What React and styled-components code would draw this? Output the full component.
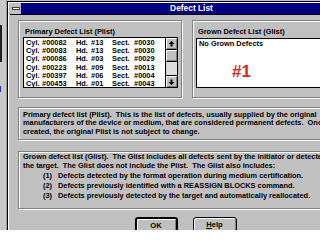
import React from "react";
import styled, { createGlobalStyle } from "styled-components";

const FONT = `"Liberation Sans", Arial, sans-serif`;

const Global = createGlobalStyle`
  html, body { margin: 0; padding: 0; background: #ffffff; }
  body { font-family: ${FONT}; }
`;

const Screen = styled.div`
  width: 320px;
  height: 230px;
  overflow: hidden;
  display: flex;
  background: #c0c0c0;
  font-family: ${FONT};
  font-weight: bold;
  font-size: 7.4px;
  color: #000;
`;

const BackWindow = styled.div`
  width: 7px;
  flex-shrink: 0;
  display: flex;
  flex-direction: column;
  background: #c8c8c8;
  box-sizing: border-box;
  border-right: 1px solid #9a9a9a;
`;

const Mark = styled.div`
  margin-top: ${(p) => p.$gap}px;
  height: ${(p) => p.$h}px;
  width: ${(p) => p.$w}px;
  background: ${(p) => p.$c};
`;

const Dialog = styled.div`
  width: 354px;
  flex-shrink: 0;
  margin-top: 1px;
  box-sizing: border-box;
  border-left: 1px solid #000;
  border-top: 1px solid #000;
  padding: 1px 0 0 2px;
  background: #c0c0c0;
  box-shadow: inset 1px 1px 0 #ffffff;
  display: flex;
  flex-direction: column;
`;

const TitleBar = styled.div`
  display: flex;
  height: 12px;
  box-sizing: border-box;
  border-bottom: 1px solid #000;
`;

const SysMenu = styled.div`
  width: 12px;
  box-sizing: border-box;
  border-right: 1px solid #000;
  background: #c0c0c0;
  display: flex;
  align-items: center;
  justify-content: center;
`;

const SysBar = styled.div`
  width: 8px;
  height: 3px;
  box-sizing: border-box;
  background: #ffffff;
  border: 1px solid #404040;
`;

const Caption = styled.div`
  flex: 1;
  background: #000080;
  color: #ffffff;
  font-size: 8.4px;
  line-height: 11px;
  text-align: center;
  white-space: pre;
`;

const Client = styled.div`
  padding: 5px 8px 0 8px;
  display: flex;
  flex-direction: column;
`;

const TopRow = styled.div`
  display: flex;
  gap: 10px;
  height: 78px;
`;

const Panel = styled.div`
  box-sizing: border-box;
  border: 1px solid #808080;
  box-shadow: inset 1px 1px 0 #ffffff, 1px 1px 0 #ffffff;
  display: flex;
  flex-direction: column;
  padding-top: 6px;
  width: ${(p) => (p.$width ? `${p.$width}px` : "auto")};
  flex: ${(p) => (p.$width ? "none" : "1")};
`;

const Label = styled.div`
  line-height: 9px;
  margin-left: ${(p) => p.$indent}px;
  white-space: pre;
`;

const ListBox = styled.div`
  position: relative;
  box-sizing: border-box;
  border: 1px solid #000;
  background: #ffffff;
  height: ${(p) => p.$h}px;
  margin: ${(p) => p.$top}px ${(p) => p.$right}px 0 ${(p) => p.$left}px;
  display: flex;
  overflow: hidden;
`;

const Rows = styled.div`
  flex: 1;
  padding: 1px 0 0 2px;
  overflow: hidden;
`;

const DefectRow = styled.div`
  display: grid;
  grid-template-columns: 16px 34px 15px 21px 22px auto;
  line-height: 8.2px;
  height: 8.2px;
  white-space: pre;
`;

const ScrollBar = styled.div`
  width: 12px;
  box-sizing: border-box;
  border-left: 1px solid #000;
  display: flex;
  flex-direction: column;
  background: #dcdcdc;
`;

const ScrollBtn = styled.div`
  height: ${(p) => p.$h}px;
  flex-shrink: 0;
  background: #c0c0c0;
  box-shadow: inset 1px 1px 0 #ffffff, inset -1px -1px 0 #808080;
  border-bottom: ${(p) => (p.$pos === "top" ? "1px solid #000" : "none")};
  border-top: ${(p) => (p.$pos === "bottom" ? "1px solid #000" : "none")};
  display: flex;
  align-items: center;
  justify-content: center;
`;

const Track = styled.div`
  flex: 1;
`;

const Placeholder = styled.div`
  padding: 1px 0 0 2px;
  line-height: 8.2px;
  white-space: pre;
`;

const Badge = styled.div`
  position: absolute;
  left: 35px;
  top: 24px;
  color: #d42a20;
  font-size: 17px;
  line-height: 17px;
  font-weight: bold;
`;

const InfoBox = styled.div`
  box-sizing: border-box;
  border: 1px solid #808080;
  box-shadow: inset 1px 1px 0 #ffffff, 1px 1px 0 #ffffff;
  margin-top: ${(p) => p.$gap}px;
  height: ${(p) => p.$h}px;
  padding: ${(p) => p.$pad}px 0 0 4px;
  overflow: hidden;
`;

const Line = styled.div`
  line-height: 8.5px;
  white-space: pre;
`;

const ItemList = styled.div`
  margin-top: 0.7px;
  padding-left: 20px;
`;

const Item = styled.div`
  display: grid;
  grid-template-columns: 15px auto;
  line-height: 9.8px;
  white-space: pre;
`;

const ButtonRow = styled.div`
  margin-top: 8px;
  display: flex;
  justify-content: center;
  gap: 15px;
`;

const Button = styled.div`
  width: ${(p) => p.$w}px;
  height: 16px;
  box-sizing: border-box;
  border: ${(p) => (p.$default ? 2 : 1)}px solid #000;
  border-radius: 3px;
  background: #c0c0c0;
  box-shadow: inset 1px 1px 0 #ffffff, inset -1px -1px 0 #808080;
  display: flex;
  align-items: center;
  justify-content: center;
  padding-bottom: ${(p) => (p.$default ? 0 : 1)}px;
  font-size: 7.6px;
  line-height: 9px;
`;

const Accel = styled.span`
  text-decoration: underline;
`;

const Arrow = ({ down }) => (
  <svg width="7" height="6" viewBox="0 0 7 6">
    <polygon
      points={down ? "3.5,6 0.5,3 2.5,3 2.5,0.5 4.5,0.5 4.5,3 6.5,3" : "3.5,0 0.5,3 2.5,3 2.5,5.5 4.5,5.5 4.5,3 6.5,3"}
      fill="#000"
    />
  </svg>
);

const defects = [
  ["00082", "13", "0030"],
  ["00083", "13", "0030"],
  ["00086", "03", "0029"],
  ["00223", "09", "0013"],
  ["00397", "06", "0004"],
  ["00453", "01", "0043"],
];

export default function App() {
  return (
    <>
      <Global />
      <Screen>
        <BackWindow>
          <Mark $gap={25} $h={37} $w={2} $c="#202020" />
          <Mark $gap={24} $h={6} $w={1} $c="#2030c0" />
        </BackWindow>
        <Dialog>
          <TitleBar>
            <SysMenu>
              <SysBar />
            </SysMenu>
            <Caption>Defect List</Caption>
          </TitleBar>
          <Client>
            <TopRow>
              <Panel $width={164}>
                <Label $indent={6}>Primary Defect List (Plist)</Label>
                <ListBox $h={51} $top={1} $left={4} $right={3}>
                  <Rows>
                    {defects.map(([cyl, hd, sect]) => (
                      <DefectRow key={cyl}>
                        <span>Cyl.</span>
                        <span>#{cyl}</span>
                        <span>Hd.</span>
                        <span>#{hd}</span>
                        <span>Sect.</span>
                        <span>#{sect}</span>
                      </DefectRow>
                    ))}
                  </Rows>
                  <ScrollBar>
                    <ScrollBtn $h={11} $pos="top">
                      <Arrow />
                    </ScrollBtn>
                    <ScrollBtn $h={11} $pos="top" />
                    <Track />
                    <ScrollBtn $h={11} $pos="bottom">
                      <Arrow down />
                    </ScrollBtn>
                  </ScrollBar>
                </ListBox>
              </Panel>
              <Panel>
                <Label $indent={5}>Grown Defect List (Glist)</Label>
                <ListBox $h={50} $top={2} $left={3} $right={3}>
                  <Placeholder>No Grown Defects</Placeholder>
                  <Badge>#1</Badge>
                </ListBox>
              </Panel>
            </TopRow>
            <InfoBox $gap={9} $h={33} $pad={2.8}>
              <Line>Primary defect list (Plist).  This is the list of defects, usually supplied by the original</Line>
              <Line>manufacturers of the device or medium, that are considered permanent defects.  Once</Line>
              <Line>created, the original Plist is not subject to change.</Line>
            </InfoBox>
            <InfoBox $gap={11} $h={58} $pad={1.3}>
              <Line>Grown defect list (Glist).  The Glist includes all defects sent by the initiator or detected by</Line>
              <Line>the target.  The Glist does not include the Plist.  The Glist also includes:</Line>
              <ItemList>
                <Item>
                  <span>(1)</span>
                  <span>Defects detected by the format operation during medium certification.</span>
                </Item>
                <Item>
                  <span>(2)</span>
                  <span>Defects previously identified with a REASSIGN BLOCKS command.</span>
                </Item>
                <Item>
                  <span>(3)</span>
                  <span>Defects previously detected by the target and automatically reallocated.</span>
                </Item>
              </ItemList>
            </InfoBox>
            <ButtonRow>
              <Button $w={43} $default>OK</Button>
              <Button $w={44}>
                <span>
                  <Accel>H</Accel>elp
                </span>
              </Button>
            </ButtonRow>
          </Client>
        </Dialog>
      </Screen>
    </>
  );
}
